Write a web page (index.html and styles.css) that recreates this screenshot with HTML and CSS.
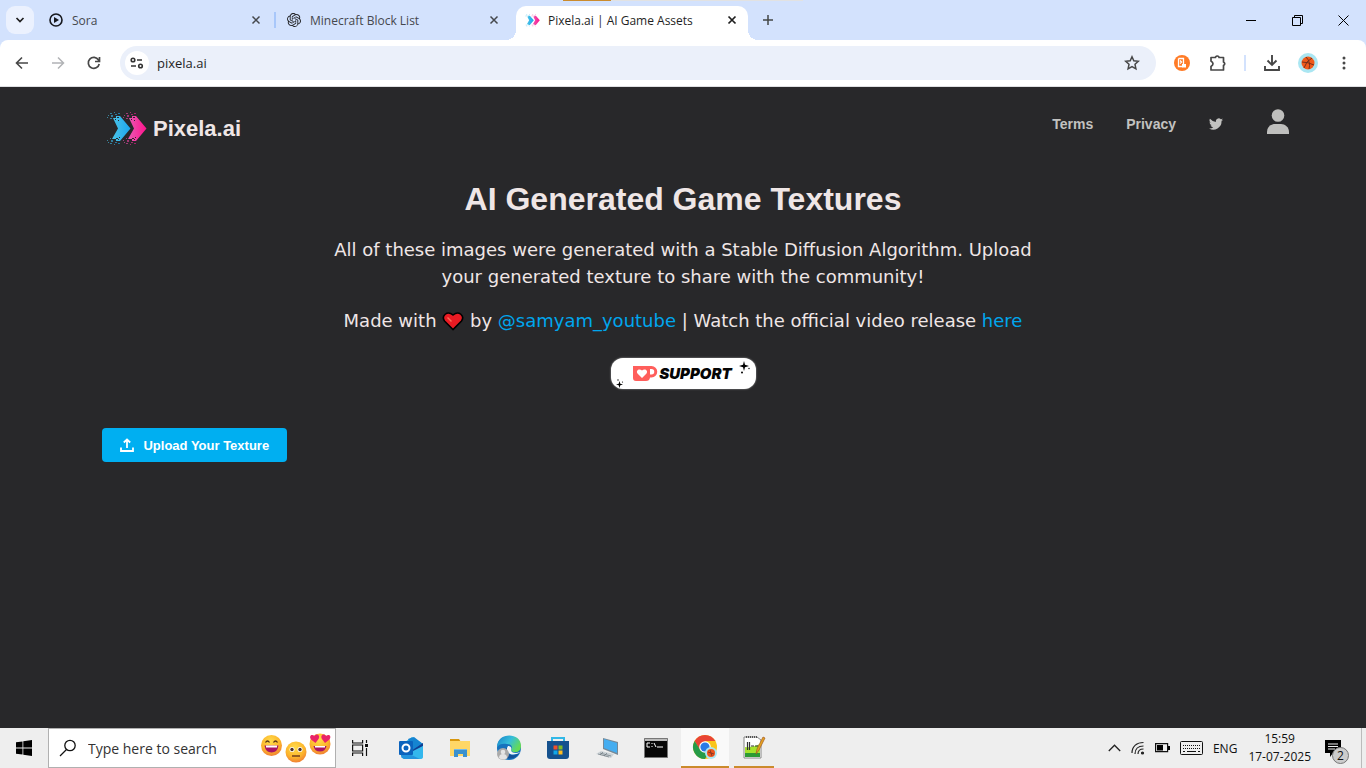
FILE: index.html
```html
<!DOCTYPE html>
<html lang="en">
<head>
<meta charset="utf-8">
<title>Pixela.ai | AI Game Assets</title>
<link rel="stylesheet" href="styles.css">
</head>
<body>
<svg class="defs" aria-hidden="true">
  <defs>
    <linearGradient id="blue" x1="0" x2="1"><stop offset="0" stop-color="#4cc3e6"/><stop offset="1" stop-color="#1aa7ee"/></linearGradient>
    <linearGradient id="pink" x1="0" x2="1"><stop offset="0" stop-color="#e85ab4"/><stop offset="1" stop-color="#ff148c"/></linearGradient>
    <radialGradient id="face" cx=".45" cy=".3" r=".75"><stop offset="0" stop-color="#ffdc4b"/><stop offset=".6" stop-color="#fcb52c"/><stop offset="1" stop-color="#ee7835"/></radialGradient>
    <linearGradient id="edge" x1="0" y1="0" x2="1" y2=".5"><stop offset="0" stop-color="#1680c8"/><stop offset=".55" stop-color="#35bdda"/><stop offset="1" stop-color="#64db55"/></linearGradient>
    <g id="chev">
      <path d="M6 6h3V4h4l10.500 12.500L13 29H9v-2H5l6-10.500z"/>
      <path opacity=".6" d="M1 3h1v1H1zM3 1h2v1H3zM4 3h2v2H4zM7 0h1v1H7zM8 2h2v1H8zM3 6h2v1H3zM11 1h2v1h-2zM1 30h1v1H1zM3 31h2v1H3zM4 28h2v2H4zM7 32h1v1H7zM8 30h2v1H8zM3 26h1v1H3zM11 31h2v1h-2zM0 28h1v1H0zM0 5h1v1H0z"/>
    </g>
    <g id="logo">
      <use href="#chev" fill="url(#blue)"/>
      <use href="#chev" x="16" fill="url(#pink)"/>
    </g>
    <path id="holes" fill="#28282a" d="M8 7h1v1H8zM10 5h2v1h-2zM11 8h1v1h-1zM9 26h2v1H9zM12 25h1v1h-1zM11 27h1v1h-1zM24 7h1v1h-1zM26 5h2v1h-2zM27 8h1v1h-1zM25 26h2v1h-2zM28 25h1v1h-1zM27 27h1v1h-1z"/>
    <g id="ball"><circle cx="7" cy="7" r="6.500" fill="#f05a1a"/><path d="M1 6q6 0 12 3M5 1q5 5 3 12M11 2Q5 5 3 12" fill="none" stroke="#6b2a18" stroke-width=".9"/></g>
  </defs>
</svg>

<header class="browser">
  <div class="window-edge"></div>
  <div class="tabstrip">
    <button class="tab-search" aria-label="Search tabs"><svg width="10" height="8" viewBox="0 0 10 8"><path d="M1.500 2 5 5.500 8.500 2" fill="none" stroke="#1f1f1f" stroke-width="1.700"/></svg></button>
    <div class="tab first">
      <svg width="14" height="14" viewBox="0 0 14 14"><circle cx="7" cy="7" r="6" fill="none" stroke="#17191e" stroke-width="1.600"/><path d="M5 4l5 3-5 3z" fill="#17191e"/></svg>
      <span class="tab-title">Sora</span>
      <button class="close" aria-label="Close Sora"><svg width="10" height="10" viewBox="0 0 10 10"><path d="M1.500 1.500l7 7M8.500 1.500l-7 7" stroke="currentColor" stroke-width="1.500"/></svg></button>
    </div>
    <div class="tab">
      <svg width="14" height="14" viewBox="0 0 24 24"><path fill="#202124" d="M22.282 9.821a5.985 5.985 0 0 0-.516-4.910 6.046 6.046 0 0 0-6.510-2.900A6.065 6.065 0 0 0 4.981 4.182a5.985 5.985 0 0 0-3.998 2.900 6.046 6.046 0 0 0 .743 7.097 5.980 5.980 0 0 0 .511 4.911 6.051 6.051 0 0 0 6.515 2.900A5.985 5.985 0 0 0 13.260 24a6.056 6.056 0 0 0 5.772-4.206 5.990 5.990 0 0 0 3.998-2.900 6.056 6.056 0 0 0-.748-7.073zM13.260 22.430a4.476 4.476 0 0 1-2.876-1.040l.142-.081 4.778-2.758a.795.795 0 0 0 .393-.681v-6.737l2.020 1.169a.071.071 0 0 1 .038.052v5.583a4.504 4.504 0 0 1-4.495 4.493zM3.600 18.304a4.471 4.471 0 0 1-.535-3.014l.142.085 4.783 2.759a.771.771 0 0 0 .781 0l5.843-3.369v2.332a.080.080 0 0 1-.033.062L9.740 19.950a4.499 4.499 0 0 1-6.140-1.646zM2.341 7.896a4.485 4.485 0 0 1 2.366-1.973V11.600a.766.766 0 0 0 .388.677l5.814 3.354-2.020 1.169a.076.076 0 0 1-.071 0l-4.830-2.787A4.504 4.504 0 0 1 2.341 7.896zm16.596 3.856l-5.833-3.387L15.120 7.200a.076.076 0 0 1 .071 0l4.830 2.791a4.494 4.494 0 0 1-.677 8.105v-5.678a.790.790 0 0 0-.407-.666zm2.010-3.023l-.142-.085-4.774-2.782a.776.776 0 0 0-.785 0L9.410 9.230V6.897a.066.066 0 0 1 .028-.061l4.830-2.787a4.499 4.499 0 0 1 6.680 4.660zM8.307 12.863l-2.020-1.164a.080.080 0 0 1-.038-.057V6.074a4.499 4.499 0 0 1 7.376-3.454l-.142.081L8.704 5.459a.795.795 0 0 0-.393.681zm1.097-2.365l2.602-1.500 2.607 1.500v2.999l-2.597 1.500-2.607-1.500z"/></svg>
      <span class="tab-title">Minecraft Block List</span>
      <button class="close" aria-label="Close Minecraft Block List"><svg width="10" height="10" viewBox="0 0 10 10"><path d="M1.500 1.500l7 7M8.500 1.500l-7 7" stroke="currentColor" stroke-width="1.500"/></svg></button>
    </div>
    <div class="tab active">
      <svg width="15" height="13" viewBox="0 0 40 34"><use href="#logo"/></svg>
      <span class="tab-title">Pixela.ai | AI Game Assets</span>
      <button class="close" aria-label="Close Pixela.ai"><svg width="10" height="10" viewBox="0 0 10 10"><path d="M1.500 1.500l7 7M8.500 1.500l-7 7" stroke="currentColor" stroke-width="1.700"/></svg></button>
    </div>
    <button class="new-tab" aria-label="New tab"><svg width="12" height="12" viewBox="0 0 12 12"><path d="M6 1v10M1 6h10" stroke="#444746" stroke-width="1.500"/></svg></button>
    <div class="window-buttons">
      <button aria-label="Minimize"><svg width="11" height="11" viewBox="0 0 11 11"><path d="M0 5.500h10" stroke="#000"/></svg></button>
      <button aria-label="Restore"><svg width="11" height="11" viewBox="0 0 11 11"><path d="M.5 2.500h8v8h-8zM2.500 2.500v-2h8v8h-2" fill="none" stroke="#000"/></svg></button>
      <button aria-label="Close window"><svg width="11" height="11" viewBox="0 0 11 11"><path d="M.5.5l10 10M10.500.5l-10 10" stroke="#000"/></svg></button>
    </div>
  </div>
  <div class="toolbar">
    <button aria-label="Back"><svg width="14" height="14" viewBox="0 0 14 14"><path d="M13 7H2M7 1.500 1.500 7 7 12.500" fill="none" stroke="#474747" stroke-width="1.600"/></svg></button>
    <button aria-label="Forward"><svg width="14" height="14" viewBox="0 0 14 14"><path d="M1 7h11M7 1.500 12.500 7 7 12.500" fill="none" stroke="#b1b3b6" stroke-width="1.500"/></svg></button>
    <button aria-label="Reload"><svg width="14" height="14" viewBox="0 0 14 14"><path d="M12.200 8A5.500 5.500 0 1 1 11.500 4L12.300 5M12.500 1v4.500H8" fill="none" stroke="#474747" stroke-width="1.700"/></svg></button>
    <div class="omnibox">
      <button class="site-info" aria-label="Site information"><svg width="14" height="12" viewBox="0 0 14 12" fill="none" stroke="#333" stroke-width="1.600"><circle cx="3" cy="3" r="1.800"/><path d="M7 3h5M1 9h5"/><circle cx="10.500" cy="9" r="1.800"/></svg></button>
      <input class="address" type="text" value="pixela.ai" aria-label="Address">
      <button aria-label="Bookmark"><svg width="16" height="16" viewBox="0 0 16 16"><path d="M8 1.800l1.800 4 4.500.5-3.300 3 .9 4.500L8 11.500l-3.900 2.300.9-4.500-3.300-3 4.500-.5z" fill="none" stroke="#474747" stroke-width="1.500"/></svg></button>
    </div>
    <div class="extensions">
      <button aria-label="Extension"><svg width="16" height="16" viewBox="0 0 16 16"><circle cx="8" cy="8" r="8" fill="#ff7b26"/><path d="M4.500 3.500h5v6M4.500 3.500v8h4M6 5.500l1.500 1.500L6 8.500" fill="none" stroke="#fff" stroke-width="1.300"/><path d="M8 9h4v3.500H8z" fill="#fff"/></svg></button>
      <button aria-label="Extensions"><svg width="18" height="18" viewBox="0 0 18 18"><path d="M2 3.500h4.500V3q1.700-2 3.500 0v.5h4.500V8q2.500 1.700 0 3.500V16H2v-3.500q4-2.700 0-5.500z" fill="none" stroke="#474747" stroke-width="1.700" stroke-linejoin="round"/></svg></button>
      <span class="tool-divider"></span>
      <button aria-label="Downloads"><svg width="16" height="16" viewBox="0 0 16 16"><path d="M8 0v9M3.500 5.500 8 10l4.500-4.500M1 11v4h14v-4" fill="none" stroke="#474747" stroke-width="1.900"/></svg></button>
      <button aria-label="Profile"><svg width="20" height="20" viewBox="0 0 20 20"><circle cx="10" cy="10" r="10" fill="#aae6f2"/><use href="#ball" x="3" y="3"/></svg></button>
      <button aria-label="Menu"><svg width="4" height="14" viewBox="0 0 4 14" fill="#474747"><circle cx="2" cy="2" r="1.500"/><circle cx="2" cy="7" r="1.500"/><circle cx="2" cy="12" r="1.500"/></svg></button>
    </div>
  </div>
</header>

<main class="page">
  <header class="site-header">
    <a class="brand" href="#"><svg width="40" height="34" viewBox="0 0 40 34"><use href="#logo"/><use href="#holes"/></svg>Pixela.ai</a>
    <nav class="site-nav">
      <a href="#">Terms</a>
      <a href="#">Privacy</a>
      <a href="#" aria-label="Twitter"><svg width="14" height="14" viewBox="0 0 24 24"><path fill="#c2c2c0" d="M24 4.600a10 10 0 0 1-2.800.8 5 5 0 0 0 2.200-2.700 10 10 0 0 1-3.100 1.200 4.900 4.900 0 0 0-8.400 4.500A14 14 0 0 1 1.700 3.100a4.900 4.900 0 0 0 1.500 6.600 4.900 4.900 0 0 1-2.200-.6 4.900 4.900 0 0 0 3.900 4.900 5 5 0 0 1-2.200.1 4.900 4.900 0 0 0 4.600 3.400A9.900 9.900 0 0 1 0 19.500 14 14 0 0 0 21.500 7a10 10 0 0 0 2.500-2.400z"/></svg></a>
      <a class="account" href="#" aria-label="Account"><svg width="22" height="26" viewBox="0 0 22 26" fill="#bfbfbd"><circle cx="11" cy="6.500" r="6.300"/><path d="M0 25v-2c0-5 4-8 8-8h6c4 0 8 3 8 8v2z"/></svg></a>
    </nav>
  </header>
  <section class="intro">
    <h1>AI Generated Game Textures</h1>
    <p>All of these images were generated with a Stable Diffusion Algorithm. Upload your generated texture to share with the community!</p>
    <p>Made with <svg class="heart" role="img" aria-label="love" width="22" height="20" viewBox="0 0 22 20"><path d="M11 18.500 2.500 10C-1 5 5-1 11 4c6-5 12 1 8.500 6z" fill="#e91b23" stroke="#000" stroke-width="1.600"/><path d="M5.500 6.500l4 4" stroke="#fb6d57" stroke-width="1.500"/></svg> by <a href="#">@samyam_youtube</a> | Watch the official video release <a href="#">here</a></p>
    <a class="support" href="#">
      <svg class="spark low" width="8" height="9" viewBox="0 0 8 9"><path d="M3.500 2l.8 2.700L7 5.500l-2.700.8-.8 2.700-.8-2.700L0 5.500l2.700-.8z"/><circle cx="2" cy="1" r=".7"/><circle cx="6.500" cy="3" r=".6"/></svg>
      <svg width="26" height="17" viewBox="0 0 26 17"><path d="M1 1h18.500a5.500 5.500 0 0 1 0 11.500H18Q17.500 16 14 16H4q-3 0-3-3zM18 4v5.500h1.500a2.700 2.700 0 0 0 0-5.500z" fill="#ff5e5b" fill-rule="evenodd"/><path d="M10 13 5.500 8.500C3.500 5 7.500 3 10 5.500 12.500 3 16.500 5 14.500 8.500z" fill="#fff"/></svg>
      <span>SUPPORT</span>
      <svg class="spark high" width="11" height="13" viewBox="0 0 11 13"><path d="M5 0l1 3.800L10 5l-4 1.200L5 10 4 6.200 0 5l4-1.200z"/><circle cx="3" cy="11.500" r="1"/><circle cx="10" cy="7.500" r=".7"/></svg>
    </a>
  </section>
  <div class="gallery-bar">
    <button class="upload"><svg width="14" height="14" viewBox="0 0 14 14" fill="none" stroke="#fff" stroke-width="1.800"><path d="M7 10V2M3.800 4.500 7 1.500l3.200 3M1 9.500V13h12V9.500"/></svg>Upload Your Texture</button>
  </div>
</main>

<footer class="taskbar">
  <button class="task" aria-label="Start"><svg width="16" height="16" viewBox="0 0 16 16"><path d="M0 2.300 6.500 1.400v6.200H0zM7.300 1.300 16 0v7.600H7.300zM0 8.400h6.500v6.200L0 13.700zM7.300 8.400H16V16l-8.700-1.300z"/></svg></button>
  <label class="search">
    <svg width="18" height="18" viewBox="0 0 18 18"><circle cx="11" cy="6.500" r="5.200" fill="none" stroke="#111" stroke-width="1.300"/><path d="M7.500 10.500 1 17" stroke="#111" stroke-width="1.300"/></svg>
    <input type="text" placeholder="Type here to search" aria-label="Type here to search">
    <svg width="74" height="32" viewBox="0 0 74 32">
      <circle cx="11.500" cy="13.500" r="10.500" fill="url(#face)"/><path d="M5.500 10.500q2-3 4 0M13.500 10.500q2-3 4 0" fill="none" stroke="#563419" stroke-width="1.300"/><path d="M4.500 13.500h14q-1 7-7 7t-7-7z" fill="#a91464"/><path d="M6 13.500h11v2H6z" fill="#fff"/>
      <circle cx="36" cy="20" r="10.500" fill="url(#face)"/><circle cx="32" cy="17.500" r="2.500" fill="#fff"/><circle cx="40" cy="17.500" r="2.500" fill="#fff"/><circle cx="32" cy="17.500" r="1.700" fill="#4b302c"/><circle cx="40" cy="17.500" r="1.700" fill="#4b302c"/><path d="M32 24h8" stroke="#69351a" stroke-width="1.400"/>
      <circle cx="60" cy="12" r="10.500" fill="url(#face)"/><path d="M53.500 14h13q-1 5.500-6.500 5.500T53.500 14z" fill="#a91464"/><path d="M55 14h10v1.500H55z" fill="#fff"/><path id="eye" d="M55.500 11 51 7.500c-2.500-4 1-6 3.500-3.500 2-3 6-1 4.200 2.800z" fill="#e92368"/><use href="#eye" transform="matrix(-1 0 0 1 120.500 0)"/>
    </svg>
  </label>
  <button class="task view" aria-label="Task view"><svg width="17" height="16" viewBox="0 0 17 16" fill="none" stroke="#111" stroke-width="1.200"><path d="M.6 0v3h10V0M.6 16v-3h10v3M.6 5h10v6H.6zM14.500 0v3M14.500 8v8"/><path d="M13 5.500h3" stroke-width="3"/></svg></button>
  <div class="apps">
    <button class="task" aria-label="Outlook"><svg width="26" height="24" viewBox="0 0 26 24"><path d="M3 9 14 1l11 7v10H3z" fill="#29aee5"/><path d="M10 3l6-2 9 7-9 7z" fill="#1584d1"/><path d="M13 15 25 7v3L15 17z" fill="#103d91"/><path d="M3 21 25 10v11q0 2-3 2H6z" fill="#34b7ed"/><path d="M3 14l19 9H6q-3-1-3-3z" fill="#2494dd"/><rect x="1" y="5" width="14" height="14" rx="1" fill="#0b63bd"/><circle cx="8" cy="12" r="3.500" fill="none" stroke="#fff" stroke-width="2"/></svg></button>
    <button class="task" aria-label="File Explorer"><svg width="22" height="20" viewBox="0 0 22 20"><path d="M1 1h9l2 3h-11z" fill="#d8970d"/><path d="M1 3h20v15H1z" fill="#ffd766"/><path d="M5 11h13v8h-4v-3H9v3H5z" fill="#3b91ce"/><path d="M5 11h13v1H5z" fill="#75b9e7"/></svg></button>
    <button class="task" aria-label="Edge"><svg width="26" height="26" viewBox="0 0 26 26"><circle cx="13" cy="13" r="12" fill="#1672bd"/><path d="M1 12C1-3 25-3 25 11c0 8-10 7-10 4 2-2 1-6-4-6-4-1-8 0-10 3z" fill="url(#edge)"/><path d="M12 11c3 0 4 2 3 4 0 3 5 4 9 2l-1 1c-8 4-15-1-11-7z" fill="#f3f6f7"/><path d="M11 13c-1 8 7 9 12 5-4 8-16 7-15-1 0-2 1-3 3-4z" fill="#135196"/><circle cx="7" cy="19" r="6" fill="#aaa"/><circle cx="7" cy="17" r="2.300" fill="#e4e4e4"/><path d="M3 23q0-4 4-4t4 4q-4 3-8 0z" fill="#e4e4e4"/></svg></button>
    <button class="task" aria-label="Microsoft Store"><svg width="24" height="24" viewBox="0 0 24 24"><path d="M6 7V2h12v5" fill="none" stroke="#32b8e7" stroke-width="2"/><path d="M1 5h22v15q0 3-3 3H4q-3 0-3-3z" fill="#15518e"/><path d="M7.500 9.500h4v4h-4z" fill="#f1512b"/><path d="M12.500 9.500h4v4h-4z" fill="#80bd22"/><path d="M7.500 14.500h4v4h-4z" fill="#13a8e8"/><path d="M12.500 14.500h4v4h-4z" fill="#ffbd20"/></svg></button>
    <button class="task" aria-label="This PC"><svg width="24" height="24" viewBox="0 0 24 24"><path d="M8 2l15 4v13L8 13z" fill="#778997"/><path d="M9 3l13 4v10L9 12z" fill="#45adf0"/><path d="M6 15l13 3-3 4L1 18z" fill="#cbd2d6"/><path d="M5 17l11 3M3 18l11 3M8 16l-3 3M12 17l-3 3" stroke="#6e7980" stroke-width=".7"/></svg></button>
    <button class="task" aria-label="Command Prompt"><svg width="24" height="20" viewBox="0 0 24 20"><path d="M.5.500h23v19H.500z" fill="#080808" stroke="#777"/><path d="M1 1h22v2H1z" fill="#bbb"/><path d="M6 5H3v4h3M8 5v1M8 8v1M10 5l2 4M13 9h6" fill="none" stroke="#fff"/></svg></button>
    <button class="task current" aria-label="Chrome"><svg width="26" height="26" viewBox="0 0 26 26"><circle cx="13" cy="13" r="12" fill="#fac51c"/><path d="M2.600 7A12 12 0 0 1 23.400 7H13L8 16z" fill="#e94435"/><path d="M2.600 7A12 12 0 0 0 13 25l5-9-9 1z" fill="#269b48"/><circle cx="13" cy="13" r="5.800" fill="#fff"/><circle cx="13" cy="13" r="4.600" fill="#287ae6"/><circle cx="19" cy="19" r="6" fill="#aae6f2"/><circle cx="19" cy="19" r="4" fill="#ed541d"/><path d="M16 18l6 2M18 16l2 6" stroke="#793224" stroke-width=".8"/></svg></button>
    <button class="task open" aria-label="Notepad++"><svg width="24" height="24" viewBox="0 0 24 24"><path d="M2 2h13l4 3v18H2z" fill="#fff" stroke="#888"/><path d="M3 12q8 1 15-3v13H3z" fill="#a5e32c"/><path d="M3 18h15v4H3z" fill="#2c9a33"/><path d="M4 2h11" stroke="#555" stroke-width="2" stroke-dasharray="1 1"/><path d="M5.500 7v8M7.500 7v8M9 11h3M13 11h3" stroke="#333" stroke-width="1.200"/><path d="M14 19l1-5 6-12 2 1-6 12z" fill="#e6a420" stroke="#a2581e" stroke-width=".7"/></svg></button>
  </div>
  <div class="tray">
    <button aria-label="Show hidden icons"><svg width="13" height="8" viewBox="0 0 13 8"><path d="M.8 7 6.500 1.200 12.200 7" fill="none" stroke="#222" stroke-width="1.300"/></svg></button>
    <button aria-label="Wi-Fi"><svg width="14" height="14" viewBox="0 0 14 14" fill="none" stroke="#222" stroke-width="1.200"><path d="M1 12C1 5 6 1.500 12.500 1.500M4 13c0-5 3-8 8.500-8M7 13c0-3 2-5 5.500-5"/><circle cx="11.500" cy="12" r="1" fill="#222"/></svg></button>
    <button aria-label="Battery"><svg width="15" height="10" viewBox="0 0 15 10"><path d="M.6.600h12v8H.600z" fill="none" stroke="#111" stroke-width="1.200"/><path d="M2 2h6v5.500H2zM13 3h2v4h-2z"/></svg></button>
    <button aria-label="Touch keyboard"><svg width="23" height="14" viewBox="0 0 23 14" fill="none" stroke="#111"><rect x=".5" y=".5" width="22" height="13" rx="1"/><path d="M3 4.500h17M3 7.500h17" stroke-dasharray="1 1"/><path d="M3 10.500h2M7 10.500h9M18 10.500h2"/></svg></button>
    <button class="lang">ENG</button>
    <button class="clock"><span>15:59</span><span>17-07-2025</span></button>
    <button class="notices" aria-label="2 notifications"><svg width="17" height="17" viewBox="0 0 17 17"><path d="M0 0h16v13H8l-3 4v-4H0z"/><path d="M3 4h10M3 6.500h10M3 9h7" stroke="#eee"/></svg><span class="badge">2</span></button>
  </div>
</footer>
</body>
</html>
```
FILE: styles.css
```css
* { box-sizing: border-box; }

body {
  margin: 0;
  min-height: 100vh;
  display: flex;
  flex-direction: column;
  background: #28282a;
  font-family: "Open Sans", "Noto Sans", sans-serif;
  font-size: 12px;
  color: #1f1f1f;
}

svg { display: block; flex: none; }
.defs { position: absolute; width: 0; height: 0; }

button {
  display: flex;
  align-items: center;
  justify-content: center;
  padding: 0;
  border: 0;
  background: none;
  font: inherit;
  color: inherit;
}

input {
  min-width: 0;
  padding: 0;
  border: 0;
  outline: 0;
  background: none;
  font: inherit;
  color: inherit;
}

a { text-decoration: none; }

/* Browser window */
.browser { position: relative; background: #d3e2fd; }
.window-edge {
  position: absolute;
  top: 0;
  left: 563px;
  width: 240px;
  height: 1px;
  background: linear-gradient(90deg, #cb8b2c 48px, #e2e2e2 48px);
}

.tabstrip { display: flex; height: 40px; padding: 6px 0 0 6px; }
.tab-search {
  width: 28px;
  height: 28px;
  border-radius: 9px;
  background: #ebf1fe;
}
.tab {
  position: relative;
  display: flex;
  align-items: center;
  width: 238px;
  height: 34px;
  padding: 0 10px 6px 9px;
  gap: 9px;
  color: #45484d;
}
.tab.first { margin-left: 6px; }
.tab.first::after {
  content: "";
  position: absolute;
  right: 2px;
  top: 6px;
  width: 2px;
  height: 16px;
  background: #a8c7fa;
}
.tab-title { flex: 1; white-space: nowrap; }
.close { width: 24px; height: 20px; }
.tab.active {
  width: 232px;
  gap: 8px;
  border-radius: 10px 10px 0 0;
  background: #fff;
  color: #1f1f1f;
  padding-right: 4px;
}
.tab.active::before,
.tab.active::after {
  content: "";
  position: absolute;
  bottom: 0;
  width: 10px;
  height: 10px;
}
.tab.active::before { left: -10px; background: radial-gradient(circle at 0 0, transparent 10px, #fff 10px); }
.tab.active::after { right: -10px; background: radial-gradient(circle at 100% 0, transparent 10px, #fff 10px); }
.new-tab { width: 28px; height: 28px; margin-left: 6px; }
.window-buttons { display: flex; height: 28px; margin-left: auto; }
.window-buttons button { width: 46px; }

.toolbar {
  display: flex;
  align-items: center;
  height: 47px;
  padding: 0 7px 1px 4px;
  border-bottom: 1px solid #dedfe2;
  border-radius: 8px 8px 0 0;
  background: #fff;
}
.toolbar > button { width: 36px; height: 34px; }
.omnibox {
  display: flex;
  flex: 1;
  align-items: center;
  height: 34px;
  margin-left: 8px;
  padding: 0 16px 0 5px;
  border-radius: 17px;
  background: #ebf0fa;
}
.site-info { width: 24px; height: 24px; border-radius: 50%; background: #fff; }
.address { flex: 1; padding-left: 8px; font-size: 13px; }
.extensions { display: flex; align-items: center; margin-left: 11px; gap: 6px; }
.extensions button { width: 30px; height: 30px; }
.tool-divider { width: 2px; height: 16px; margin: 0 5px; background: #d3e2fd; }

/* Site */
.page { flex: 1; color: #efe6e6; }
.site-header {
  display: flex;
  align-items: center;
  justify-content: space-between;
  padding: 22px 77px 0 107px;
}
.brand {
  display: flex;
  align-items: center;
  gap: 6px;
  font: bold 22px "Liberation Sans", sans-serif;
  color: #efe6e6;
}
.site-nav {
  display: flex;
  align-items: center;
  gap: 33px;
  margin-bottom: 10px;
  font: bold 14px "Liberation Sans", sans-serif;
}
.site-nav a { color: #c2c2c0; }
.account { margin-left: 11px; margin-bottom: 4px; }

.intro {
  display: flex;
  flex-direction: column;
  align-items: center;
  max-width: 710px;
  margin: 0 auto;
  padding-top: 31px;
  text-align: center;
  font: 18px/27px "DejaVu Sans", sans-serif;
}
.intro h1 { margin: 0 0 18px; font: bold 32px/38px "Liberation Sans", sans-serif; }
.intro p { margin: 0 0 17px; }
.intro p a { color: #00a6ed; }
.heart { display: inline-block; vertical-align: -4px; }
.support {
  position: relative;
  display: flex;
  align-items: center;
  justify-content: center;
  gap: 1px;
  width: 145px;
  height: 31px;
  margin-top: 7px;
  padding-right: 2px;
  border-radius: 12px;
  background: #fff;
  box-shadow: 0 0 2px #aaa;
  color: #050505;
  font: italic 900 15px Inter, sans-serif;
}
.spark { position: absolute; }
.spark.low { left: 5px; bottom: 1px; }
.spark.high { right: 6px; top: 3px; }

.gallery-bar { width: 85%; margin: 39px auto 0; }
.upload {
  gap: 9px;
  height: 34px;
  padding: 0 18px;
  border-radius: 4px;
  background: #00aff1;
  color: #fff;
  font: bold 13px "Liberation Sans", sans-serif;
}

/* Taskbar */
.taskbar { display: flex; height: 40px; background: #eee; }
.task { width: 48px; height: 40px; }
.search {
  display: flex;
  align-items: center;
  width: 288px;
  height: 40px;
  padding: 0 1px 0 10px;
  gap: 11px;
  border: 1px solid #b0b0b0;
  background: #fff;
}
.search input { flex: 1; font-size: 14px; }
.search input::placeholder { color: #333; opacity: 1; }
.apps { display: flex; gap: 1px; margin-left: 3px; }
.current { background: #f9f9f9; border-bottom: 2px solid #cb8b2c; }
.open { width: 40px; margin-left: 4px; border-bottom: 2px solid #cb8b2c; }
.tray { display: flex; align-items: center; margin-left: auto; padding-right: 4px; color: #111; }
.tray button { height: 40px; margin-right: 10px; }
.tray .lang { margin-right: 11px; }
.tray .clock { flex-direction: column; line-height: 18px; margin-right: 14px; }
.tray .notices { position: relative; width: 37px; margin: 0; justify-content: flex-start; border-right: 1px solid #bbb; }
.badge {
  position: absolute;
  left: 7px;
  top: 19px;
  width: 17px;
  height: 17px;
  border: 1px solid #777;
  border-radius: 50%;
  background: #ccc;
  line-height: 15px;
}
```
